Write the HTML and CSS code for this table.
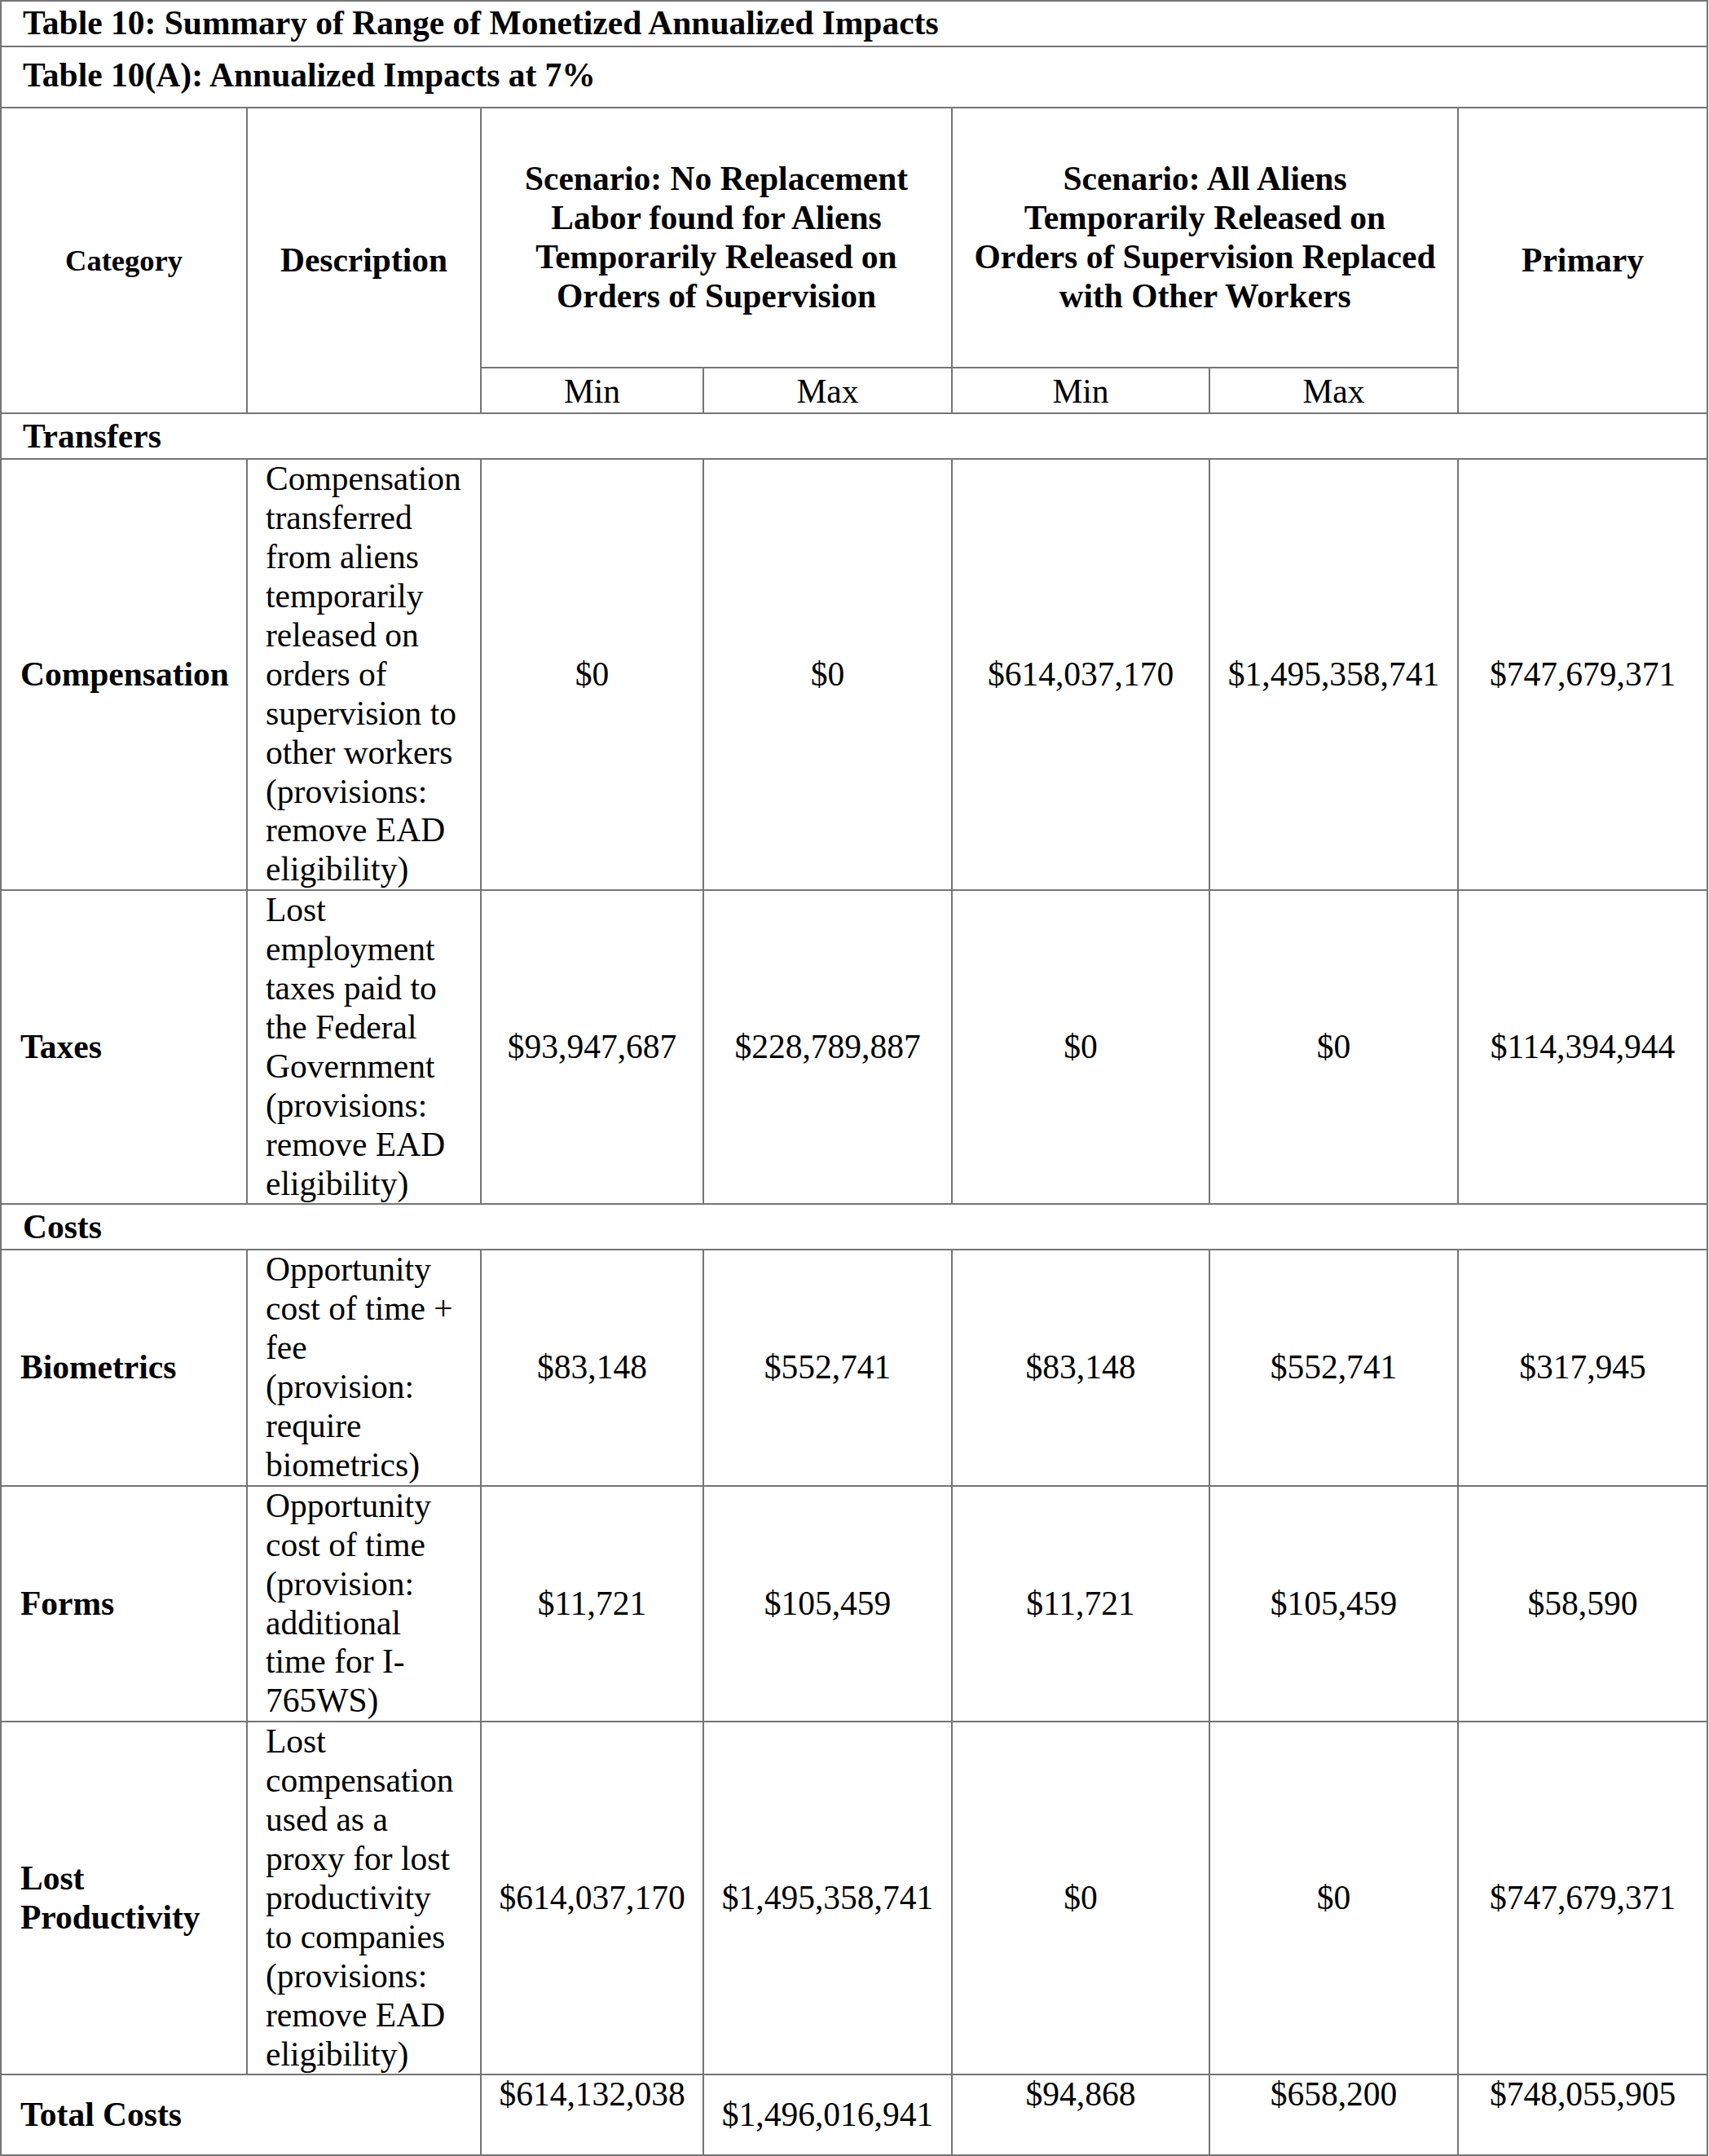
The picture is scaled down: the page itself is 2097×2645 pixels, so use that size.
FILE: index.html
```html
<!DOCTYPE html>
<html lang="en">
<head>
<meta charset="utf-8">
<title>Table 10: Summary of Range of Monetized Annualized Impacts</title>
<link rel="stylesheet" href="styles.css">
</head>
<body>
<div class="sheet">
  <div class="cell full title b">Table 10: Summary of Range of Monetized Annualized Impacts</div>
  <div class="cell full subtitle b">Table 10(A): Annualized Impacts at 7%</div>

  <div class="cell rs2 mid center b small">Category</div>
  <div class="cell rs2 mid center b">Description</div>
  <div class="cell cs2 scen mid center b">Scenario: No Replacement<br>Labor found for Aliens<br>Temporarily Released on<br>Orders of Supervision</div>
  <div class="cell cs2 scen mid center b">Scenario: All Aliens<br>Temporarily Released on<br>Orders of Supervision Replaced<br>with Other Workers</div>
  <div class="cell rs2 mid center b">Primary</div>
  <div class="cell mm center">Min</div>
  <div class="cell mm center">Max</div>
  <div class="cell mm center">Min</div>
  <div class="cell mm center">Max</div>

  <div class="cell full section b">Transfers</div>

  <div class="cell cat mid b">Compensation</div>
  <div class="cell desc">Compensation<br>transferred<br>from aliens<br>temporarily<br>released on<br>orders of<br>supervision to<br>other workers<br>(provisions:<br>remove EAD<br>eligibility)</div>
  <div class="cell mid center">$0</div>
  <div class="cell mid center">$0</div>
  <div class="cell mid center">$614,037,170</div>
  <div class="cell mid center">$1,495,358,741</div>
  <div class="cell mid center">$747,679,371</div>

  <div class="cell cat mid b">Taxes</div>
  <div class="cell desc">Lost<br>employment<br>taxes paid to<br>the Federal<br>Government<br>(provisions:<br>remove EAD<br>eligibility)</div>
  <div class="cell mid center">$93,947,687</div>
  <div class="cell mid center">$228,789,887</div>
  <div class="cell mid center">$0</div>
  <div class="cell mid center">$0</div>
  <div class="cell mid center">$114,394,944</div>

  <div class="cell full section b">Costs</div>

  <div class="cell cat mid b">Biometrics</div>
  <div class="cell desc">Opportunity<br>cost of time +<br>fee<br>(provision:<br>require<br>biometrics)</div>
  <div class="cell mid center">$83,148</div>
  <div class="cell mid center">$552,741</div>
  <div class="cell mid center">$83,148</div>
  <div class="cell mid center">$552,741</div>
  <div class="cell mid center">$317,945</div>

  <div class="cell cat mid b">Forms</div>
  <div class="cell desc">Opportunity<br>cost of time<br>(provision:<br>additional<br>time for I-<br>765WS)</div>
  <div class="cell mid center">$11,721</div>
  <div class="cell mid center">$105,459</div>
  <div class="cell mid center">$11,721</div>
  <div class="cell mid center">$105,459</div>
  <div class="cell mid center">$58,590</div>

  <div class="cell cat mid b">Lost<br>Productivity</div>
  <div class="cell desc">Lost<br>compensation<br>used as a<br>proxy for lost<br>productivity<br>to companies<br>(provisions:<br>remove EAD<br>eligibility)</div>
  <div class="cell mid center">$614,037,170</div>
  <div class="cell mid center">$1,495,358,741</div>
  <div class="cell mid center">$0</div>
  <div class="cell mid center">$0</div>
  <div class="cell mid center">$747,679,371</div>

  <div class="cell cs2 cat mid b total">Total Costs</div>
  <div class="cell top center">$614,132,038</div>
  <div class="cell mid center">$1,496,016,941</div>
  <div class="cell top center">$94,868</div>
  <div class="cell top center">$658,200</div>
  <div class="cell top center">$748,055,905</div>
</div>
</body>
</html>
```

FILE: styles.css
```css
html, body {
  margin: 0;
  padding: 0;
  background: #ffffff;
}

body {
  font-family: "Liberation Serif", "Times New Roman", serif;
  font-size: 41.5px;
  line-height: 47.9px;
  color: #000000;
}

.sheet {
  display: grid;
  grid-template-columns: 302px 287px 273px 305px 316px 305px 306px;
  width: 2096px;
  box-sizing: border-box;
  border-left: 2px solid #757575;
  border-top: 2px solid #757575;
}

.cell {
  box-sizing: border-box;
  border-right: 2px solid #757575;
  border-bottom: 2px solid #757575;
  display: flex;
  flex-direction: column;
  white-space: nowrap;
}

.b { font-weight: bold; }

.full { grid-column: span 7; }
.cs2 { grid-column: span 2; }
.rs2 { grid-row: span 2; }

.mid { justify-content: center; }
.top { justify-content: flex-start; }
.center { text-align: center; align-items: center; }

.title {
  padding: 3px 0 3px 26px;
}

.subtitle {
  padding: 11px 0 14px 26px;
}

.small {
  font-size: 36.5px;
}

.scen {
  padding: 63px 0;
}

.mm {
  padding: 5px 0 1px;
}

.section {
  padding: 4px 0 2px 26px;
}

.cat {
  padding-left: 23px;
}

.desc {
  padding-left: 22px;
}

.total {
  min-height: 99px;
}
```
